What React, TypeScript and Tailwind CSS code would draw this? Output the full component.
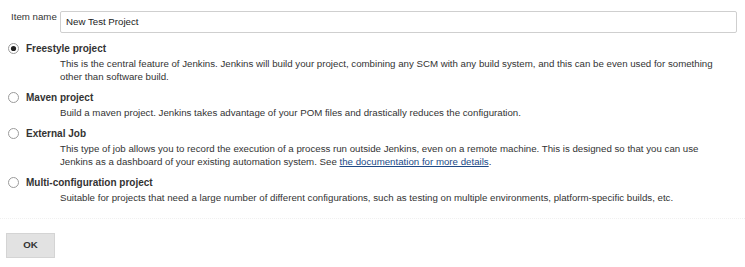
import React from "react";

function Radio({ checked }: { checked?: boolean }) {
  return (
    <svg width="11" height="11" viewBox="0 0 11 11" className="shrink-0">
      <circle cx="5.5" cy="5.5" r="5" fill="#fff" stroke="#9a9a9a" strokeWidth="1" />
      {checked && <circle cx="5.5" cy="5.5" r="2.6" fill="#222" />}
    </svg>
  );
}

function Option({
  title,
  checked,
  children,
  first,
}: {
  title: string;
  checked?: boolean;
  children: React.ReactNode;
  first?: boolean;
}) {
  return (
    <div className={first ? "" : "mt-[6px]"}>
      <div className="flex h-[16px] items-center pl-[8px]">
        <Radio checked={checked} />
        <span className="ml-[7px] font-bold text-[10px] text-[#333]">{title}</span>
      </div>
      <div className="ml-[60px] mt-[1px] pr-[20px] text-[9.7px] leading-[13px] text-[#333]">
        {children}
      </div>
    </div>
  );
}

export default function App() {
  return (
    <div
      className="w-[745px] h-[267px] bg-white overflow-hidden text-[#333]"
      style={{ fontFamily: '"Liberation Sans", Arial, sans-serif' }}
    >
      <div className="flex items-start pt-[10px]">
        <div className="w-[60px] pl-[11px] text-[9.7px] leading-[13px] text-[#333]">Item name</div>
        <div className="mt-[1px] flex h-[22px] w-[677px] items-center rounded-[2px] border border-[#cfcfcf] pl-[5px] text-[9.7px] text-[#222]">
          New Test Project
        </div>
      </div>

      <div className="mt-[7px]">
        <Option title="Freestyle project" checked first>
          This is the central feature of Jenkins. Jenkins will build your project, combining any SCM with any build system, and this can be even used for something other than software build.
        </Option>
        <Option title="Maven project">
          Build a maven project. Jenkins takes advantage of your POM files and drastically reduces the configuration.
        </Option>
        <Option title="External Job">
          This type of job allows you to record the execution of a process run outside Jenkins, even on a remote machine. This is designed so that you can use Jenkins as a dashboard of your existing automation system. See{" "}
          <a href="#" className="text-[#204a87] underline">
            the documentation for more details
          </a>
          .
        </Option>
        <Option title="Multi-configuration project">
          Suitable for projects that need a large number of different configurations, such as testing on multiple environments, platform-specific builds, etc.
        </Option>
      </div>

      <div className="mt-[14px] border-t border-dotted border-[#f0f0f0]" />

      <div className="pl-[6px] pt-[14px]">
        <button className="flex h-[25px] w-[49px] items-center justify-center border border-[#d4d4d4] bg-[#e2e2e2] text-[9.7px] font-bold text-[#333]">
          OK
        </button>
      </div>
    </div>
  );
}
